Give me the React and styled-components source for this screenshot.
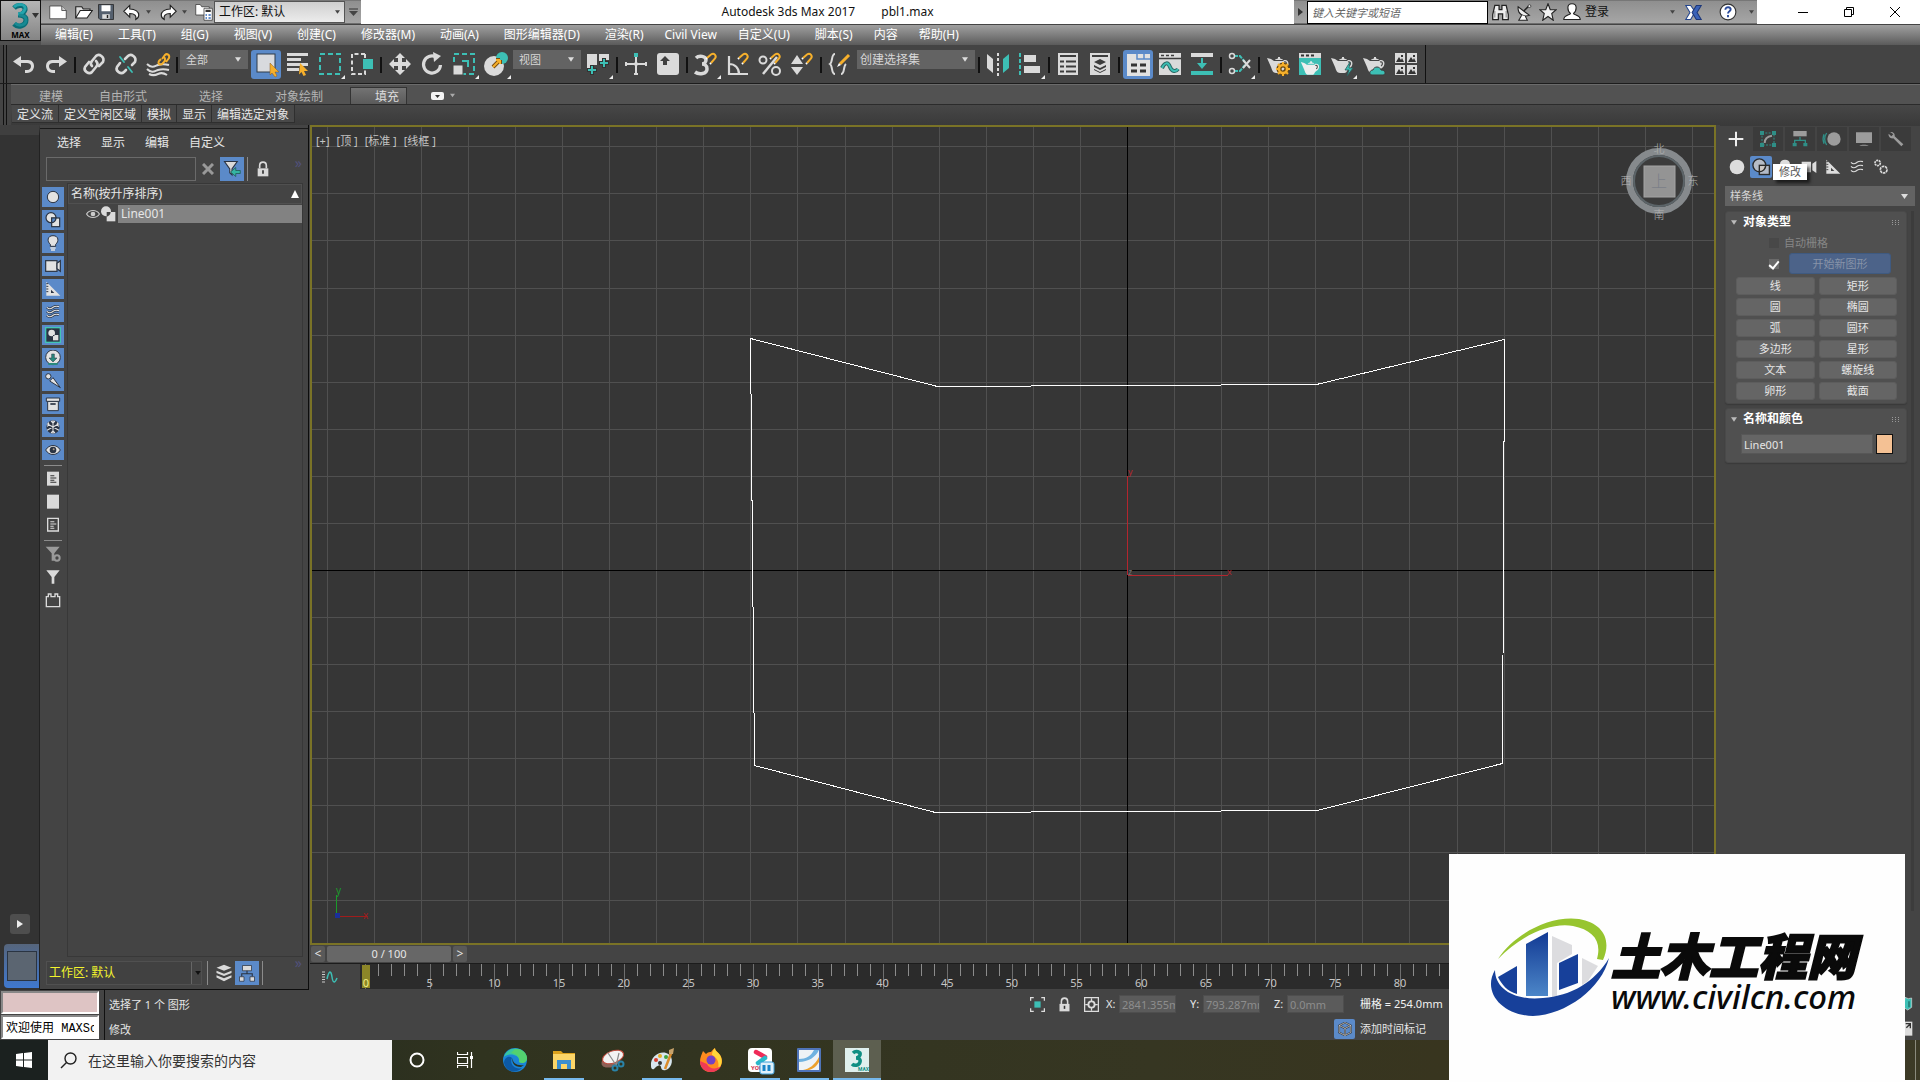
import React from "react";
import styled, { createGlobalStyle, css } from "styled-components";

const LIGHT = "#dadada";
const TEAL = "#3dbfb5";
const GOLD = "#f6b02c";
const BLUE = "#5b8ac9";
const SANS = '"Noto Sans", "Noto Sans CJK SC", sans-serif';

const GlobalStyle = createGlobalStyle`
  * { box-sizing: border-box; }
  html, body { margin: 0; padding: 0; background: #fff; }
  body { font: 12px/16px ${SANS}; color: #e6e6e6; overflow: hidden; }
  button, input, select { font: inherit; color: inherit; margin: 0; border-radius: 0; }
  button { padding: 0; border: 0; background: none; }
  svg { display: block; flex: none; }
`;

const Screen = styled.div`
  position: relative;
  display: flex;
  flex-direction: column;
  height: 100vh;
  min-width: 1500px;
  padding-bottom: 2px;
  background: #fff;
`;

/* ---------- icons ---------- */

const Icon = ({ size = 24, children, ...rest }) => (
  <svg width={size} height={size} viewBox="0 0 24 24" fill="none" aria-hidden="true" {...rest}>
    {children}
  </svg>
);

const Corner = () => <path d="M27 23v4h-4z" fill="#eee" />;

const Magnet = ({ x = 12, y = 1 }) => (
  <g transform={`translate(${x} ${y})`} stroke={GOLD} strokeWidth="2">
    <path d="M1 5l4-3.500c3-2 6 1 4 4l-4 4.500" />
    <path d="M1 5l-1 1M5 10l-1 1" stroke="#fff" />
  </g>
);

const Teapot = ({ fill = LIGHT }) => (
  <g>
    <path d="M1 6l4 1c1 .4 2 1.500 3 2h9l1-1c5-1 6 5 2 8-1 1-2 1-3 3-1 2-2 2-4 2h-3c-3 0-4-3-5-6L1 6z" fill={fill} />
    <path d="M9 8c1-2 7-2 8 0z" fill={fill} />
    <path d="M12 5h2v2h-2z" fill={fill} />
    <path d="M18 10c3-1 3 3 1 4" stroke="#444" strokeWidth="1.200" />
  </g>
);

const Arrow = () => (
  <path d="M14 11l8 8h-4l2 4-2.500 1-2-4-2.500 2.500z" fill={GOLD} />
);

const ShapesGlyph = () => (
  <g stroke="#2b2b2b" strokeWidth="1.500">
    <circle cx="10" cy="10" r="7" fill="#b7bcc6" />
    <rect x="10" y="10" width="11" height="10" fill="#d9cfc6" fillOpacity=".7" />
    <path d="M17 10a7 7 0 0 1-7 7" />
  </g>
);

const WavesGlyph = ({ color = LIGHT, edge }) => (
  <g fill="none">
    {[5, 11, 17].map((y) => (
      <g key={y}>
        {edge && <path d={`M3 ${y}c4 4 6 2 9 0s6-2 9-1`} stroke={edge} strokeWidth="4" />}
        <path d={`M3 ${y}c4 4 6 2 9 0s6-2 9-1`} stroke={color} strokeWidth="1.800" />
      </g>
    ))}
  </g>
);

const TriangleGlyph = ({ color = LIGHT, inner = "#444" }) => (
  <g>
    <path d="M2 1l21 21H2z" fill={color} />
    <path d="M9 13l5 5H9z" fill={inner} />
    <path d="M2 4h3M2 8h3M2 12h3M2 16h3" stroke={inner} strokeWidth="1.500" />
  </g>
);

const tool = {
  undo: <path d="M9 4v4h7c4 0 6 3 6 6s-2 7-7 7h-2v-3h2c3 0 4-2 4-4s-2-3-4-3H9v4L1 9.500z" fill={LIGHT} />,
  redo: <path d="M15 4v4H8c-4 0-6 3-6 6s2 7 7 7h2v-3H9c-3 0-4-2-4-4s2-3 4-3h6v4l8-5.500z" fill={LIGHT} />,
  link: (
    <g stroke={LIGHT} strokeWidth="2.600" strokeLinecap="round">
      <path d="M10 14c-2-2-1-4 0-5l4-5c3-3 9 1 7 6l-4 4" />
      <path d="M14 9c2 2 2 4 0 6l-4 5c-3 3-9-1-7-5l4-5" />
    </g>
  ),
  unlink: (
    <g strokeWidth="2.600" strokeLinecap="round">
      <path d="M11 7l3-3c3-3 9 1 7 6l-3 3" stroke={LIGHT} />
      <path d="M12 18l-2 2c-3 3-9-1-7-5l3-4" stroke={LIGHT} />
      <path d="M6 5l4 5M14 15l4 5" stroke={TEAL} strokeWidth="1.800" />
    </g>
  ),
  bind: (
    <g>
      <path d="M1 12c5 5 8 2 11 1s7-1 11 0M1 17c5 5 8 2 11 1s7-1 11 0M3 22c4 2 7 1 9 0s6-1 9 1" stroke={LIGHT} strokeWidth="2" />
      <g stroke={GOLD} strokeWidth="2">
        <path d="M16 7l3-4c2-2 5 0 4 3l-3 4M18 5c2 2 1 4-1 6-2 3-6 1-4-2l2-2" />
      </g>
    </g>
  ),
  select: (
    <g>
      <rect x="3" y="2" width="18" height="18" fill="#d8dade" stroke="#2f3a49" />
      <path d="M16 11l9 9h-4l2 4-2 1-3-4-2 2z" fill={GOLD} stroke="#8a5a20" strokeWidth=".5" />
    </g>
  ),
  byName: (
    <g>
      <path d="M1 2.500h21M1 7.500h14M1 12.500h21M1 17.500h12" stroke={LIGHT} strokeWidth="3" />
      <Arrow />
    </g>
  ),
  region: (
    <g>
      <rect x="2" y="2" width="20" height="20" stroke={TEAL} strokeWidth="2" strokeDasharray="5 3" />
      <Corner />
    </g>
  ),
  crossing: (
    <g>
      <path d="M15 2H2v20h13v-4M15 2v4" stroke={LIGHT} strokeWidth="2" strokeDasharray="4 2.500" />
      <rect x="13" y="7" width="10" height="10" fill={TEAL} />
    </g>
  ),
  move: (
    <path d="M12 1l5 5h-3v4h4V7l5 5-5 5v-3h-4v4h3l-5 5-5-5h3v-4H6v3l-5-5 5-5v3h4V6H7z" fill={LIGHT} />
  ),
  rotate: (
    <g>
      <path d="M16 5a8.500 8.500 0 1 0 4.500 8" stroke={LIGHT} strokeWidth="3.200" />
      <path d="M13 0l8 4-7 6z" fill={LIGHT} />
    </g>
  ),
  scale: (
    <g>
      <rect x="2" y="2" width="20" height="20" stroke={TEAL} strokeWidth="2" strokeDasharray="5 3" />
      <rect x="1" y="13" width="10" height="10" fill={LIGHT} stroke="#444" />
      <path d="M10 9h6v6" stroke={TEAL} strokeWidth="2" />
      <Corner />
    </g>
  ),
  place: (
    <g>
      <circle cx="10" cy="14" r="10" fill={LIGHT} />
      <circle cx="18" cy="6" r="6" fill={TEAL} />
      <path d="M9 15l7-7M16 8h-4M16 8v4" stroke="#7a4d10" strokeWidth="4" />
      <path d="M9 15l7-7M16 8h-4M16 8v4" stroke={GOLD} strokeWidth="2" />
      <Corner />
    </g>
  ),
  pivot: (
    <g>
      <path d="M1 2h10v11H7v5H1zM13 2h10v6h-5v5h-5z" fill={LIGHT} />
      <path d="M6 13v10M1 18h10M18 6v10M13 11h10" stroke="#333" strokeWidth="4" />
      <path d="M6 14v8M2 18h8M18 7v8M14 11h8" stroke={TEAL} strokeWidth="2" />
      <Corner />
    </g>
  ),
  manipulate: (
    <g>
      <path d="M12 5v17M2 12h20M2 10v4M22 10v4M10 22h4" stroke={LIGHT} strokeWidth="2" />
      <rect x="10" y="1" width="4" height="4" fill={TEAL} />
      <circle cx="12" cy="12" r="2" fill={LIGHT} />
    </g>
  ),
  keyboard: (
    <g>
      <rect x="1" y="1" width="22" height="22" rx="3" fill={LIGHT} />
      <path d="M9 4l5 5h-3v4H7V9H4z" fill="#3f3f3f" />
    </g>
  ),
  snap: (
    <g>
      <path d="M2 6c3-3 10-2 10 2 0 2-2 4-4 4 2 0 5 1 5 5 0 5-8 6-12 3" stroke={LIGHT} strokeWidth="3.500" />
      <Magnet />
      <Corner />
    </g>
  ),
  angle: (
    <g>
      <path d="M3 4v18h19M3 12c6 0 10 4 10 10" stroke={LIGHT} strokeWidth="2.200" />
      <Magnet />
    </g>
  ),
  percent: (
    <g>
      <path d="M19 5L5 22" stroke={LIGHT} strokeWidth="2.500" />
      <circle cx="5" cy="8" r="3.500" stroke={LIGHT} strokeWidth="2" />
      <circle cx="18" cy="19" r="4" stroke={LIGHT} strokeWidth="2" />
      <Magnet />
    </g>
  ),
  spinner: (
    <g>
      <path d="M1 12l6-9 6 9zM1 15h12l-6 8z" fill={LIGHT} />
      <Magnet />
    </g>
  ),
  sets: (
    <g>
      <path d="M7 2c-4 0-2 8-5 10 3 2 1 10 5 10M13 22c4 0 2-8 5-10" stroke={LIGHT} strokeWidth="2" />
      <path d="M12 12L21 3" stroke={GOLD} strokeWidth="3" />
      <path d="M9 15l2-4 2 2z" fill="#fff" />
    </g>
  ),
  mirror: (
    <g>
      <path d="M1 2l6 5v14l-6-5z" fill={LIGHT} />
      <path d="M23 2l-6 5v14l6-5z" fill={TEAL} />
      <path d="M12 1v23" stroke={LIGHT} strokeWidth="2" strokeDasharray="3 2" />
    </g>
  ),
  align: (
    <g>
      <path d="M2 1v22" stroke={TEAL} strokeWidth="2" strokeDasharray="4 2" />
      <path d="M6 3h12v7H6zM6 14h16v7H6z" fill={LIGHT} />
      <Corner />
    </g>
  ),
  sceneList: (
    <g>
      <rect x="2" y="1" width="20" height="22" fill={LIGHT} />
      <path d="M4 4h16M4 9.500h4M10 9.500h10M4 14.500h4M10 14.500h10M4 19.500h4M10 19.500h10" stroke="#3c3c3c" strokeWidth="2" />
    </g>
  ),
  layers: (
    <g>
      <rect x="2" y="1" width="20" height="22" fill={LIGHT} />
      <path d="M4 4h16" stroke="#3c3c3c" strokeWidth="2" />
      <path d="M12 7l6 3-6 3-6-3zM6 13l6 3 6-3v2l-6 3-6-3zM6 17l6 3 6-3v1l-6 3-6-3z" fill="#3c3c3c" />
    </g>
  ),
  ribbon: (
    <g>
      <rect x="1" y="2" width="23" height="22" fill="#e1e1e1" />
      <path d="M11 2v5h13M18 2v5" stroke={BLUE} strokeWidth="1.500" />
      <path d="M5 13h6M14 13h6M5 19h6M14 19h6" stroke="#333" strokeWidth="3" />
    </g>
  ),
  curve: (
    <g>
      <rect x="1" y="1" width="22" height="22" fill={LIGHT} />
      <path d="M1 6.500h22M3 3.500h3M8 3.500h3M13 3.500h3" stroke="#3c3c3c" strokeWidth="1.500" />
      <path d="M4 16c3-6 6-6 8-1s6 5 8 2" stroke="#2c6b67" strokeWidth="4" />
      <path d="M4 16c3-6 6-6 8-1s6 5 8 2" stroke={TEAL} strokeWidth="2" />
    </g>
  ),
  dock: (
    <g>
      <path d="M1 1h22v4H1z" fill={LIGHT} />
      <path d="M1 19h22v4H1zM11 6h2v5h4l-5 6-5-6h4z" fill={TEAL} />
    </g>
  ),
  schematic: (
    <g>
      <path d="M6 4h6l5 6M6 19h6l5-6" stroke={TEAL} strokeWidth="2" strokeDasharray="4 1" />
      <circle cx="4" cy="4" r="2.500" stroke={LIGHT} strokeWidth="1.500" />
      <circle cx="4" cy="19" r="2.500" stroke={LIGHT} strokeWidth="1.500" />
      <path d="M15 8l7 8M22 8l-7 8" stroke={LIGHT} strokeWidth="2" />
      <Corner />
    </g>
  ),
  renderSetup: (
    <g>
      <Teapot />
      <circle cx="17" cy="17" r="4" stroke="#6b4a10" strokeWidth="5" />
      <circle cx="17" cy="17" r="4" stroke={GOLD} strokeWidth="2.500" />
      <path d="M17 10v3M17 21v3M10 17h3M21 17h3M12 12l2 2M20 20l2 2M22 12l-2 2M12 22l2-2" stroke={GOLD} strokeWidth="2" />
    </g>
  ),
  renderFrame: (
    <g>
      <rect x="1" y="1" width="22" height="22" fill={TEAL} />
      <path d="M1 1h22v5H1z" fill={LIGHT} />
      <path d="M3 3.500h3M8 3.500h3M13 3.500h3" stroke="#333" strokeWidth="2" />
      <g transform="translate(2 5) scale(.85)">
        <Teapot fill="#eee" />
      </g>
    </g>
  ),
  render: (
    <g>
      <Teapot />
      <path d="M20 10l-5 8h4l-2 6 6-8h-4z" fill={TEAL} stroke="#2b5d5a" strokeWidth=".8" />
      <Corner />
    </g>
  ),
  cloud: (
    <g>
      <Teapot />
      <path d="M10 23c-3 0-3-5 1-5 1-4 7-4 8 0 5 0 5 5 2 5z" fill={TEAL} stroke="#3c3c3c" />
    </g>
  ),
  gallery: (
    <g>
      {[[1, 1], [13, 1], [1, 13], [13, 13]].map(([x, y]) => (
        <g key={`${x}${y}`}>
          <rect x={x} y={y} width="10" height="10" fill={LIGHT} />
          <path d={`M${x + 1} ${y + 9}l3-5 2 3 1-2 2 4z`} fill="#333" />
          <rect x={x + 6} y={y + 2} width="2" height="2" fill="#333" />
        </g>
      ))}
    </g>
  ),
};

/* ---------- shared controls ---------- */

const Caret = ({ color = "#ddd", w = 7, h = 5 }) => (
  <svg width={w} height={h} viewBox="0 0 7 5" aria-hidden="true">
    <path d="M0 0h7L3.500 5z" fill={color} />
  </svg>
);

const SelectBox = styled.div`
  display: grid;
  align-items: center;
  width: ${(p) => p.$width};
  height: ${(p) => p.$height || "20px"};
  margin: ${(p) => p.$margin || 0};
  > * { grid-area: 1 / 1; }
  > svg { justify-self: end; margin-right: ${(p) => p.$caretGap || "7px"}; pointer-events: none; }
`;

const SelectField = styled.select`
  appearance: none;
  width: 100%;
  height: 100%;
  padding: 0 ${(p) => p.$pad || "6px"};
  border: ${(p) => p.$border || "0"};
  background: ${(p) => p.$bg || "#636363"};
  color: ${(p) => p.$color || "#d6d6d6"};
  font-size: ${(p) => p.$size || "11px"};
  line-height: 16px;
`;

const Dropdown = ({ label, value, caret, caretW, caretH, box = {}, field = {} }) => (
  <SelectBox {...box}>
    <SelectField aria-label={label} defaultValue={value} {...field}>
      <option>{value}</option>
    </SelectField>
    <Caret color={caret} w={caretW} h={caretH} />
  </SelectBox>
);

/* ---------- header ---------- */

const Header = styled.header`
  display: grid;
  grid-template-columns: 41px 1fr;
  height: 45px;
  flex: none;
  background: #4f4f4f;
`;

const AppButton = styled.button`
  display: flex;
  flex-direction: column;
  align-items: center;
  width: 41px;
  height: 41px;
  border: 1px solid #111;
  background: linear-gradient(#b5b5b5, #858585);
  color: #000;
  font-weight: 700;
  font-size: 8px;
  line-height: 10px;
`;

const AppMark = styled.span`
  display: flex;
  align-items: center;
  gap: 2px;
  height: 29px;
  padding-left: 10px;
`;

const TitleRow = styled.div`
  display: flex;
  height: 24px;
  background: #fff;
  color: #111;
`;

const GreyStrip = styled.div`
  display: flex;
  align-items: center;
  height: 24px;
  background: linear-gradient(#8f8f8f, #a6a6a6);
  border-top: 1px solid #777;
  border-bottom: 1px solid #6d6d6d;
`;

const SmallButton = styled.button`
  display: grid;
  place-items: center;
  width: ${(p) => p.$w || 24}px;
  height: 22px;
`;

const WindowTitle = styled.h1`
  flex: 1;
  display: flex;
  justify-content: center;
  gap: 26px;
  margin: 0;
  font-size: 12px;
  font-weight: 400;
  line-height: 23px;
`;

const HelpSearch = styled.input`
  width: 181px;
  height: 23px;
  padding: 0 4px;
  border: 1px solid #000;
  background: #fff;
  font-size: 11px;
  font-style: italic;
  &::placeholder { color: #666; opacity: 1; }
`;

const SignIn = styled.button`
  display: flex;
  align-items: center;
  justify-content: space-between;
  width: 92px;
  padding: 0 1px;
  color: #111;
`;

const WindowButton = styled.button`
  display: grid;
  place-items: center;
  width: 46px;
  height: 24px;
`;

const WindowButtons = styled.div`
  display: flex;
  padding: 0 2px 0 23px;
`;

const MenuBar = styled.nav`
  display: flex;
  align-items: center;
  gap: 1px;
  height: 21px;
  padding-left: 2px;
  border-top: 1px solid #444;
  background: linear-gradient(#a0a0a0, #5b5b5b);
`;

const MenuItem = styled.button`
  padding: 0 ${(p) => (p.$plain ? 8 : 12)}px;
  color: #fff;
  line-height: 18px;
  white-space: nowrap;
`;

const MENUS = ["编辑(E)", "工具(T)", "组(G)", "视图(V)", "创建(C)", "修改器(M)", "动画(A)", "图形编辑器(D)", "渲染(R)", "Civil View", "自定义(U)", "脚本(S)", "内容", "帮助(H)"];

function TopHeader() {
  return (
    <Header>
      <AppButton aria-label="MAX">
        <AppMark>
          <svg width="18" height="26" viewBox="0 0 18 26" fill="none">
            <path d="M2 5c4-4 12-3 11 2-1 3-4 5-7 5 4 0 8 1 8 5 0 6-8 8-12 4" stroke="#0b6d76" strokeWidth="5" />
            <path d="M2 4c4-4 12-3 11 2-1 3-4 5-7 5" stroke="#25a5ad" strokeWidth="3" />
            <path d="M7 12c4 0 7 1 7 5 0 5-7 7-11 3" stroke="#188a93" strokeWidth="3" />
          </svg>
          <Caret color="#333" />
        </AppMark>
        MAX
      </AppButton>
      <div>
        <TitleRow>
          <GreyStrip>
            <SmallButton $w={34} aria-label="新建">
              <Icon size={18}><path d="M1 4h16l6 6v11H1z" fill="#fff" stroke="#333" /><path d="M17 4v6h6" fill="#ccc" stroke="#333" /></Icon>
            </SmallButton>
            <SmallButton $w={14} aria-label="打开">
              <Icon size={18}><path d="M1 20V5h8l2 3h9v3" fill="#ddd" stroke="#222" strokeWidth="1.500" /><path d="M1 20l6-10h16l-7 10z" fill="#fff" stroke="#222" strokeWidth="1.500" /></Icon>
            </SmallButton>
            <SmallButton $w={34} aria-label="保存">
              <Icon size={18}><path d="M2 2h20v20H4l-2-2z" fill="#55606e" stroke="#222" /><path d="M6 3h12v8H6z" fill="#fff" /><path d="M7 15h10v6H7z" fill="#ddd" /><path d="M14 16v4" stroke="#222" strokeWidth="2" /></Icon>
            </SmallButton>
            <SmallButton $w={14} aria-label="撤消">
              <Icon size={18}><path d="M9 3v5c8 0 12 4 12 8 0 3-2 5-4 6 1-5-1-8-8-8v5L1 11z" fill="#fff" stroke="#222" strokeWidth="1.500" /></Icon>
            </SmallButton>
            <SmallButton $w={22} aria-label="撤消列表"><Caret color="#444" w={5} h={4} /></SmallButton>
            <SmallButton $w={14} aria-label="重做">
              <Icon size={18}><path d="M15 3v5C7 8 3 12 3 16c0 3 2 5 4 6-1-5 1-8 8-8v5l8-8z" fill="#fff" stroke="#222" strokeWidth="1.500" /></Icon>
            </SmallButton>
            <SmallButton $w={22} aria-label="重做列表"><Caret color="#444" w={5} h={4} /></SmallButton>
            <SmallButton $w={16} aria-label="工作区">
              <Icon size={18}><path d="M1 2h6l2 3h10v11H1z" fill="#fff" stroke="#333" /><path d="M12 7h11v16H12z" fill="#fff" stroke="#333" /><path d="M14 9h7v3h-7z" fill="#333" /><path d="M14 15h2v2h-2zM18 15h3v2h-3zM14 19h2v2h-2zM18 19h3v2h-3z" fill="#3268b8" /></Icon>
            </SmallButton>
            <Dropdown
              label="工作区"
              value="工作区: 默认"
              caret="#444"
              caretW={5}
              caretH={4}
              box={{ $width: "131px", $height: "22px", $margin: "0 0 0 3px", $caretGap: "5px" }}
              field={{ $bg: "linear-gradient(#cfcfcf, #ececec)", $color: "#111", $size: "12px", $border: "1px solid #555", $pad: "4px" }}
            />
            <SmallButton $w={16} aria-label="自定义快速访问">
              <svg width="9" height="8" viewBox="0 0 9 8"><path d="M0 1h9" stroke="#333" /><path d="M0 3h9L4.500 8z" fill="#444" /></svg>
            </SmallButton>
          </GreyStrip>
          <WindowTitle>
            <span>Autodesk 3ds Max 2017</span>
            <span>pbl1.max</span>
          </WindowTitle>
          <GreyStrip>
            <SmallButton $w={13} aria-label="展开"><svg width="5" height="8"><path d="M0 0l5 4-5 4z" fill="#333" /></svg></SmallButton>
            <HelpSearch aria-label="搜索帮助" placeholder="键入关键字或短语" />
            <SmallButton aria-label="搜索">
              <Icon size={17}><path d="M4 2h6v6h4V2h6l3 13v7h-8v-8H9v8H1v-7z" fill="#eee" stroke="#222" strokeWidth="1.800" /><path d="M4 10v9M20 10v9" stroke="#888" strokeWidth="1.500" /></Icon>
            </SmallButton>
            <SmallButton aria-label="通讯中心">
              <Icon size={17}><path d="M3 4c-1 10 7 15 16 12z" fill="#eee" stroke="#222" strokeWidth="1.500" /><path d="M11 10l7-7" stroke="#222" strokeWidth="2" /><circle cx="19" cy="3" r="2" fill="#eee" stroke="#222" /><path d="M8 16l-4 7h12l-3-6" fill="#fff" stroke="#222" strokeWidth="1.500" /></Icon>
            </SmallButton>
            <SmallButton aria-label="收藏夹">
              <Icon size={18}><path d="M12 1l3 8h8l-6 5 2 9-7-5-7 5 2-9-6-5h8z" fill="#f2f2f2" stroke="#222" strokeWidth="1.500" /></Icon>
            </SmallButton>
            <SmallButton aria-label="用户">
              <Icon size={18}><path d="M12 1c8 0 6 10 2 13 0 2 9 2 9 8H1c0-6 9-6 9-8C6 11 4 1 12 1z" fill="#fff" stroke="#222" strokeWidth="1.500" /></Icon>
            </SmallButton>
            <SignIn>登录<Caret color="#444" w={5} h={4} /></SignIn>
            <SmallButton $w={34} aria-label="应用商店">
              <Icon size={17}><path d="M1 2h7l5 7-1 6-4 7H1l6-10z" fill="#fff" stroke="#24468f" strokeWidth="1.500" /><path d="M23 2h-7l-6 10 6 10h7l-6-10z" fill="#3a62b8" stroke="#1d3779" strokeWidth="1.500" /></Icon>
            </SmallButton>
            <SmallButton $w={36} aria-label="帮助">
              <Icon size={18}><circle cx="12" cy="12" r="10.500" fill="#fff" stroke="#333" strokeWidth="1.500" /><path d="M8.500 9c0-5 8-4 7 0-.5 2-3.500 2-3.500 5M12 16v3" stroke="#2a4a9a" strokeWidth="2.500" /></Icon>
            </SmallButton>
            <SmallButton $w={11} aria-label="帮助列表"><Caret color="#444" w={5} h={4} /></SmallButton>
          </GreyStrip>
          <WindowButtons>
            <WindowButton aria-label="最小化"><svg width="10" height="10"><path d="M0 5.500h10" stroke="#000" /></svg></WindowButton>
            <WindowButton aria-label="还原"><svg width="10" height="10" fill="none"><path d="M.5 2.500h7v7h-7zM2.500 2.500v-2h7v7h-2" stroke="#000" /></svg></WindowButton>
            <WindowButton aria-label="关闭"><svg width="10" height="10"><path d="M0 0l10 10M10 0L0 10" stroke="#000" /></svg></WindowButton>
          </WindowButtons>
        </TitleRow>
        <MenuBar>
          {MENUS.map((m) => (
            <MenuItem key={m} $plain={!m.includes("(")}>{m}</MenuItem>
          ))}
        </MenuBar>
      </div>
    </Header>
  );
}

/* ---------- main toolbar ---------- */

const ToolbarRow = styled.div`
  display: flex;
  flex: none;
  height: 39px;
  background: #444;
  border-bottom: 1px solid #1c1c1c;
`;

const grip = css`
  background-image: linear-gradient(90deg, transparent 3px, #111 3px, #111 4px, transparent 4px, transparent 6px, #111 6px, #111 7px, transparent 7px);
`;

const Tools = styled.div`
  display: flex;
  align-items: flex-start;
  padding: 5px 3px 0 8px;
  border-right: 1px solid #111;
  ${grip}
`;

const ToolButton = styled.button`
  display: grid;
  place-items: center;
  width: 30px;
  height: 29px;
  margin: 0 1px;
  padding-bottom: 2px;
  border-radius: 3px;
  ${(p) => p.$active && css`background: ${BLUE};`}
  svg { overflow: visible; }
`;

const ToolDivider = styled.span`
  width: 2px;
  height: 16px;
  margin: 7px 2px 0;
  background: #111;
`;

const TOOLS = [
  "undo", "redo", "|", "link", "unlink", "bind", "|", { value: "全部", width: "68px", m: "0 2px 0 0" },
  "select*", "byName", "region", "crossing", "|", "move", "rotate", "scale", "place",
  { value: "视图", width: "68px", m: "0 1px" }, "pivot", "|", "manipulate", "keyboard", "|",
  "snap", "angle", "percent", "spinner", "|", "sets", { value: "创建选择集", width: "118px", m: "0 1px", size: "12px", pad: "3px" }, "|",
  "mirror", "align", "|", "sceneList", "layers", "|", "ribbon*", "curve", "dock", "|", "schematic", "|",
  "renderSetup", "renderFrame", "render", "cloud", "gallery",
];

function MainToolbar() {
  return (
    <ToolbarRow>
      <Tools>
        {TOOLS.map((t, i) => {
          if (t === "|") return <ToolDivider key={i} />;
          if (typeof t === "object") {
            return (
              <Dropdown
                key={i}
                label={t.value}
                value={t.value}
                caretW={6}
                box={{ $width: t.width, $height: "19px", $margin: t.m }}
                field={{ $size: t.size, $pad: t.pad }}
              />
            );
          }
          const name = t.replace("*", "");
          return (
            <ToolButton key={i} $active={t.endsWith("*")} aria-label={name}>
              <Icon>{tool[name]}</Icon>
            </ToolButton>
          );
        })}
      </Tools>
    </ToolbarRow>
  );
}

/* ---------- ribbon ---------- */

const Ribbon = styled.div`
  flex: none;
  height: 41px;
  padding-left: 11px;
  background-color: #444;
  ${grip}
`;

const RibbonTabs = styled.div`
  display: flex;
  align-items: flex-end;
  height: 21px;
  padding-left: 3px;
  background: #525252;
  border-top: 1px solid #6b6b6b;
  border-bottom: 1px solid #2b2b2b;
`;

const RibbonTab = styled.button`
  width: ${(p) => p.$w}px;
  height: 17px;
  padding-left: 24px;
  text-align: left;
  line-height: 18px;
  white-space: nowrap;
  color: #b4b4b4;
  border: 1px solid transparent;
  border-bottom: 0;
  ${(p) => p.$active && css`
    background: linear-gradient(#737373, #5a5a5a);
    border-color: #333;
    color: #ddd;
  `}
`;

const RibbonToggle = styled.button`
  display: flex;
  align-items: center;
  gap: 6px;
  height: 17px;
  margin-left: 24px;
`;

const RibbonPanels = styled.div`
  display: flex;
  height: 20px;
  padding-left: 1px;
  background: linear-gradient(#474747, #3a3a3a);
`;

const RibbonPanel = styled.button`
  height: 18px;
  padding: 0 5px;
  border: solid #2f2f2f;
  border-width: 0 1px 1px 0;
  background: #494949;
  line-height: 20px;
  white-space: nowrap;
`;

function RibbonBar() {
  return (
    <Ribbon>
      <RibbonTabs>
        <RibbonTab $w={60}>建模</RibbonTab>
        <RibbonTab $w={100}>自由形式</RibbonTab>
        <RibbonTab $w={76}>选择</RibbonTab>
        <RibbonTab $w={100}>对象绘制</RibbonTab>
        <RibbonTab $w={57} $active>填充</RibbonTab>
        <RibbonToggle aria-label="最小化功能区">
          <svg width="13" height="8"><rect width="13" height="8" rx="2" fill="#f4f4f4" /><path d="M4 3h5L6.500 6z" fill="#333" /></svg>
          <Caret color="#aaa" w={5} h={5} />
        </RibbonToggle>
      </RibbonTabs>
      <RibbonPanels>
        {["定义流", "定义空闲区域", "模拟", "显示", "编辑选定对象"].map((p) => (
          <RibbonPanel key={p}>{p}</RibbonPanel>
        ))}
      </RibbonPanels>
    </Ribbon>
  );
}

/* ---------- workspace ---------- */

const Workspace = styled.main`
  display: flex;
  flex: 1;
  min-height: 0;
  background: #444;
`;

const LeftDock = styled.aside`
  display: flex;
  flex-direction: column;
  justify-content: flex-end;
  align-items: flex-end;
  width: 40px;
  border-top: 10px solid #3f3f3f;
  background: #333;
  border-right: 1px solid #222;
`;

const PlayButton = styled.button`
  display: grid;
  place-items: center;
  align-self: center;
  width: 20px;
  height: 20px;
  margin-bottom: 10px;
  border-radius: 3px;
  background: #4e4e4e;
`;

const LayoutTab = styled.button`
  width: 35px;
  height: 44px;
  margin-bottom: 2px;
  padding: 7px 2px 8px 3px;
  border-radius: 4px 0 0 4px;
  background: linear-gradient(#56657c, #3f78cf);
  &::before {
    content: "";
    display: block;
    height: 28px;
    border: 1px solid #2a3442;
    background: #5b6571;
  }
`;

const Explorer = styled.section`
  display: flex;
  flex-direction: column;
  width: 269px;
  padding-top: 3px;
  border-right: 1px solid #0d0d0d;
  border-bottom: 1px solid #0d0d0d;
`;

const ExplorerMenu = styled.nav`
  display: flex;
  gap: 20px;
  height: 29px;
  padding-left: 17px;
  border-top: 1px solid #1a1a1a;
  button { line-height: 28px; }
`;

const ExplorerSearch = styled.div`
  display: flex;
  align-items: center;
  height: 24px;
  padding-left: 6px;
`;

const FindInput = styled.input`
  width: 150px;
  height: 24px;
  border: 1px solid #6a6a6a;
  background: #424242;
`;

const SquareButton = styled.button`
  display: grid;
  place-items: center;
  width: ${(p) => p.$w || 24}px;
  height: 24px;
  ${(p) => p.$active && css`background: ${BLUE};`}
`;

const Divider = styled.span`
  width: 1px;
  height: 24px;
  margin: 0 ${(p) => p.$gap || 2}px;
  background: #8b8b8b;
`;

const More = styled.button`
  align-self: flex-start;
  margin-left: auto;
  padding: 1px 6px 0 0;
  color: #51517c;
  font-size: 14px;
  line-height: 10px;
`;

const ExplorerBody = styled.div`
  display: flex;
  flex: 1;
  min-height: 0;
  padding-top: 2px;
`;

const FilterColumn = styled.div`
  display: flex;
  flex-direction: column;
  align-items: flex-start;
  gap: 3px;
  width: 27px;
  padding: 4px 0 0 2px;
`;

const FilterButton = styled.button`
  display: grid;
  place-items: center;
  width: 22px;
  height: 20px;
  ${(p) => p.$on && css`background: ${BLUE};`}
`;

const FilterRule = styled.hr`
  width: 18px;
  height: 1px;
  margin: 2px 0 0 2px;
  border: 0;
  background: #8b8b8b;
`;

const ListPanel = styled.div`
  flex: 1;
  margin-right: 5px;
  border: 1px solid #383838;
`;

const ListHead = styled.button`
  display: flex;
  align-items: center;
  justify-content: space-between;
  width: 100%;
  height: 20px;
  padding: 0 2px;
  border: 1px solid #505050;
  white-space: nowrap;
`;

const ListRow = styled.div`
  display: flex;
  align-items: center;
  height: 20px;
  padding-left: 18px;
`;

const RowName = styled.span`
  flex: 1;
  height: 18px;
  margin-left: 2px;
  padding-left: 3px;
  background: #828282;
  line-height: 18px;
`;

const ExplorerFoot = styled.div`
  display: flex;
  align-items: center;
  height: 32px;
  padding-left: 6px;
`;

const fill = "#e2e2e2";
const ink = "#2b3443";
const FILTERS = [
  <circle cx="12" cy="12" r="8.500" fill={fill} stroke={ink} strokeWidth="1.500" />,
  <g stroke={ink} strokeWidth="1.800"><circle cx="9" cy="8.500" r="7.500" fill={fill} /><rect x="10" y="9" width="12" height="13" fill={fill} /><path d="M10 16a7.500 7.500 0 0 0 6.500-7H10z" fill={BLUE} /></g>,
  <g><path d="M12 1c-9 0-9 9-4 13v3h8v-3c5-4 5-13-4-13z" fill={fill} stroke={ink} strokeWidth="1.500" /><path d="M8 19.500h8M9 22.500h6" stroke={fill} strokeWidth="2" /></g>,
  <g stroke={ink} strokeWidth="1.800" fill={fill}><rect x="1" y="4" width="17" height="16" /><path d="M18 8l5-4v16l-5-4z" /></g>,
  <TriangleGlyph color={fill} inner={ink} />,
  <WavesGlyph color={fill} edge={ink} />,
  <g><rect x="1" y="1" width="22" height="22" fill={ink} stroke="#43c5b5" strokeWidth="2" /><circle cx="10" cy="9" r="5" fill={fill} /><path d="M12 12h8v8h-8z" fill={fill} /><path d="M12 14a5 5 0 0 0 3-2h-3z" fill={ink} /></g>,
  <g><circle cx="12" cy="11" r="11" fill={fill} stroke={ink} strokeWidth="1.500" /><path d="M10 6h4v6h4l-6 6-6-6h4z" fill="#2a8a7d" stroke={ink} strokeWidth=".8" /><path d="M5 21h14" stroke="#2a8a7d" strokeWidth="3" /></g>,
  <g stroke={ink} strokeWidth="1.500" fill={fill}><circle cx="5" cy="5" r="4" /><path d="M7 12l5-5 11 15z" /></g>,
  <g stroke={ink} strokeWidth="1.500" fill={fill}><path d="M4 8h16v14H4z" /><path d="M2 3h20v5H2z" /><path d="M8 12h8" strokeWidth="2.500" /></g>,
  <g><circle cx="12" cy="12" r="10" fill={ink} /><path d="M12 2v20M3 7l18 10M21 7L3 17M9 3l3 3 3-3M9 21l3-3 3 3M3 11l3-2-1-4M21 11l-3-2 1-4" stroke={fill} strokeWidth="1.600" /></g>,
  <g><path d="M1 12c5-9 17-9 22 0-5 9-17 9-22 0z" fill={fill} stroke={ink} strokeWidth="1.500" /><circle cx="12" cy="12" r="5" fill={ink} /><circle cx="13" cy="11" r="1.500" fill="#a98" /></g>,
];

const VIEW_FILTERS = [
  <g><path d="M3 1h18v21H3z" fill={LIGHT} /><path d="M8 7h6M8 10.500h9M8 14h6M8 17h9" stroke="#333" strokeWidth="1.600" /></g>,
  <path d="M3 1h18v21H3z" fill={LIGHT} />,
  <g><path d="M4 2h16v19H4z" stroke={LIGHT} strokeWidth="2" /><path d="M8 7h6M8 10.500h9M8 14h5M8 17h6" stroke={LIGHT} strokeWidth="1.600" /></g>,
];

const FUNNELS = [
  <g><path d="M1 1h21l-8 10v11h-4V11z" fill="#9a9a9a" /><circle cx="18" cy="18" r="4" stroke="#9a9a9a" strokeWidth="3" fill="#444" /></g>,
  <path d="M2 2h20l-8 10v10h-4V12z" fill={LIGHT} />,
  <path d="M2 7h3V3h4v4h6V3h4v4h3v15H2z" stroke={LIGHT} strokeWidth="2" />,
];

const Lock = ({ size = 18 }) => (
  <Icon size={size}><path d="M4 11h16v12H4z" fill={LIGHT} /><path d="M7 11V7c0-7 10-7 10 0v4" stroke={LIGHT} strokeWidth="2.500" /><path d="M12 14v5" stroke="#333" strokeWidth="2.500" /></Icon>
);

const Tiers = () => (
  <Icon size={18}><path d="M12 1l10 4-10 4L2 5zM2 9l10 4 10-4v3l-10 4-10-4zM2 15l10 4 10-4v3l-10 5-10-5z" fill={LIGHT} /></Icon>
);

function SceneExplorer() {
  return (
    <Explorer>
      <ExplorerMenu>
        {["选择", "显示", "编辑", "自定义"].map((m) => <button key={m}>{m}</button>)}
      </ExplorerMenu>
      <ExplorerSearch>
        <FindInput aria-label="查找" />
        <SquareButton aria-label="清除"><svg width="12" height="12"><path d="M1 1l10 10M11 1L1 11" stroke="#999" strokeWidth="3" /></svg></SquareButton>
        <SquareButton $active aria-label="过滤器">
          <Icon size={18}><path d="M2 2h17l-7 10v8l-3-3v-5z" fill={LIGHT} stroke={ink} strokeWidth="1.500" /><path d="M23 14h-6v-4l-7 6 7 6v-4h6z" fill="#35b5a2" stroke="#1d5a52" /></Icon>
        </SquareButton>
        <Divider $gap={3} />
        <SquareButton aria-label="锁定"><Lock size={16} /></SquareButton>
        <More aria-label="更多">»</More>
      </ExplorerSearch>
      <ExplorerBody>
        <FilterColumn>
          {FILTERS.map((f, i) => <FilterButton key={i} $on aria-label={`显示类别 ${i + 1}`}><Icon size={16}>{f}</Icon></FilterButton>)}
          <FilterRule />
          {VIEW_FILTERS.map((f, i) => <FilterButton key={i} aria-label={`视图 ${i + 1}`}><Icon size={16}>{f}</Icon></FilterButton>)}
          <FilterRule />
          {FUNNELS.map((f, i) => <FilterButton key={i} aria-label={`筛选 ${i + 1}`}><Icon size={16}>{f}</Icon></FilterButton>)}
        </FilterColumn>
        <ListPanel>
          <ListHead>
            名称(按升序排序)
            <svg width="8" height="8"><path d="M0 8h8L4 0z" fill="#fff" /></svg>
          </ListHead>
          <ListRow>
            <Icon size={14}><path d="M1 12c5-8 17-8 22 0-5 8-17 8-22 0z" stroke="#ccc" strokeWidth="2" /><circle cx="12" cy="12" r="4" fill="#ccc" /></Icon>
            <Icon size={16}><circle cx="9" cy="8" r="7.500" fill={LIGHT} /><path d="M10 9h13v14H10z" fill={LIGHT} /><path d="M10 16a8 8 0 0 0 6-7h-6z" fill="#444" /></Icon>
            <RowName>Line001</RowName>
          </ListRow>
        </ListPanel>
      </ExplorerBody>
      <ExplorerFoot>
        <Dropdown
          label="工作区"
          value="工作区: 默认"
          caret="#111"
          caretW={6}
          caretH={4}
          box={{ $width: "156px", $height: "24px", $caretGap: "1px" }}
          field={{ $bg: "linear-gradient(90deg, #414141 144px, #666 144px, #666 145px, #444 145px)", $color: "#f3f32d", $size: "12px", $border: "1px solid #505050", $pad: "2px" }}
        />
        <Divider $gap={5} />
        <SquareButton $w={22} aria-label="按层排序"><Tiers /></SquareButton>
        <SquareButton $active aria-label="按层次排序">
          <Icon size={18}><path d="M6 2h12v7H6z" fill={LIGHT} stroke={ink} /><path d="M12 9v4M5 17v-4h14v4" stroke={ink} strokeWidth="1.500" /><path d="M2 17h6v6H2zM16 17h6v6h-6z" fill={LIGHT} stroke={ink} /></Icon>
        </SquareButton>
        <Divider $gap={3} />
        <More aria-label="更多">»</More>
      </ExplorerFoot>
    </Explorer>
  );
}

/* ---------- viewport ---------- */

const ViewColumn = styled.section`
  display: flex;
  flex-direction: column;
  flex: 1;
  min-width: 0;
  margin: 0 4px 0 1px;
`;

const Viewport = styled.div`
  position: relative;
  flex: 1;
  min-height: 0;
  border: 2px solid #7a7326;
  background: #363636;
`;

const Canvas = styled.svg`
  width: 100%;
  height: 100%;
`;

const ViewLabel = styled.div`
  position: absolute;
  top: 6px;
  left: 4px;
  display: flex;
  gap: 7px;
  color: #c4c4c4;
  font-size: 11px;
  white-space: pre;
`;

const ViewCube = styled.svg`
  position: absolute;
  top: 11px;
  right: 12px;
`;

const GRID = 47.08;
const range = (from, to) => Array.from({ length: to - from + 1 }, (_, i) => from + i);
const OUTLINE = [[-377, -232], [-190, -184], [189, -186], [377, -231], [375, 193], [190, 240], [-192, 242], [-373, 195]];

function SceneCanvas() {
  return (
    <Canvas viewBox="-815 -443 1402 816" preserveAspectRatio="xMidYMid slice" role="img" aria-label="顶视图">
      <g stroke="#505050" shapeRendering="crispEdges">
        {range(-18, 18).map((i) => <path key={`v${i}`} d={`M${Math.round(i * GRID) + 0.5} -460v860`} />)}
        {range(-9, 8).map((i) => <path key={`h${i}`} d={`M-860 ${Math.round(i * GRID) + 0.5}h1600`} />)}
      </g>
      <path d="M.5 -460v860M-860 .5h1600" stroke="#000" shapeRendering="crispEdges" />
      <polygon transform="translate(.5 .5)" points={OUTLINE.map((p) => p.join(",")).join(" ")} fill="none" stroke="#fff" shapeRendering="crispEdges" />
      <path d="M.5 -94v99M.5 5h100" stroke="#b3262e" fill="none" shapeRendering="crispEdges" />
      <g fontSize="9" fontFamily={SANS}>
        <text x="1" y="-95" fill="#b3262e">y</text>
        <text x="100" y="5" fill="#b3262e">x</text>
        <text x="1" y="5" fill="#777">z</text>
      </g>
      <g shapeRendering="crispEdges" fill="none">
        <path d="M-790.500 345v-20" stroke="#1b9a2b" />
        <path d="M-790 346h31" stroke="#a01c1c" />
        <path d="M-792 343h5v5h-5z" fill="#1a2f9a" />
      </g>
      <g fontSize="10" fontFamily={SANS}>
        <text x="-791" y="324" fill="#1b9a2b">y</text>
        <text x="-764" y="349" fill="#a01c1c">x</text>
      </g>
    </Canvas>
  );
}

const Cube = () => (
  <ViewCube width="86" height="86" viewBox="0 0 86 86" aria-hidden="true">
    <circle cx="43" cy="43" r="29.500" fill="#3c3c3c" stroke="#868a8d" strokeWidth="7" />
    <circle cx="43" cy="43" r="25" fill="none" stroke="#5c6468" strokeWidth="2" />
    <rect x="28" y="28" width="31" height="31" fill="#949494" stroke="#a3a3a3" />
    <g fontFamily={SANS} fontSize="11" fontWeight="300" fill="#b4b4b4" textAnchor="middle">
      <text x="43" y="15">北</text>
      <text x="10" y="47">西</text>
      <text x="77" y="47">东</text>
      <text x="43" y="81">南</text>
      <text x="43" y="49" fontSize="16" fill="#7b7f88">上</text>
    </g>
  </ViewCube>
);

const TimeSlider = styled.div`
  display: flex;
  align-items: center;
  gap: 2px;
  height: 19px;
  padding-left: 1px;
  border-bottom: 1px solid #1c1c1c;
`;

const SliderPart = styled.button`
  width: ${(p) => p.$w}px;
  height: 16px;
  border-radius: 2px;
  background: ${(p) => (p.$w > 20 ? "#676767" : "#595959")};
  font-size: ${(p) => (p.$w > 20 ? 11 : 12)}px;
  line-height: 16px;
`;

const TrackBar = styled.div`
  display: flex;
  height: 26px;
`;

const CurveToggle = styled.button`
  display: grid;
  place-items: center;
  width: 40px;
  margin-right: 10px;
`;

const Ruler = styled.div`
  display: flex;
  flex: 1;
  padding: 0 44px 0 5px;
  background: #2b2b2b;
  border-bottom: 1px solid #444;
`;

const Frame = styled.span`
  flex: 1 1 0;
  width: 0;
  height: ${(p) => (p.$major ? 25 : 12)}px;
  border-left: 1px solid ${(p) => (p.$major ? "#6f6f6f" : "#8c8c8c")};
  display: flex;
`;

const FrameLabel = styled.span`
  flex: none;
  width: 30px;
  margin-left: -16px;
  padding-top: 11px;
  text-align: center;
  font-size: 11px;
  line-height: 16px;
  color: #c6c6c6;
`;

const PlayHead = styled.span`
  flex: none;
  width: 8px;
  height: 23px;
  margin: 1px 0 0 -4px;
  padding-top: 10px;
  background: #8c8628;
  font-size: 11px;
  line-height: 16px;
  text-align: center;
  color: #f1ee86;
`;

const LAST_LABEL = 80;

function ViewArea() {
  return (
    <ViewColumn>
      <Viewport>
        <SceneCanvas />
        <ViewLabel>
          <span>[+]</span><span>[顶 ]</span><span>[标准 ]</span><span>[线框 ]</span>
        </ViewLabel>
        <Cube />
      </Viewport>
      <TimeSlider>
        <SliderPart $w={14}>&lt;</SliderPart>
        <SliderPart $w={124}>0 / 100</SliderPart>
        <SliderPart $w={14}>&gt;</SliderPart>
      </TimeSlider>
      <TrackBar>
        <CurveToggle aria-label="曲线编辑器">
          <svg width="16" height="12" fill="none"><path d="M0 1h3M0 3.500h3M0 6h3M0 8.500h3M0 11h3" stroke="#ccc" /><path d="M5 8c2-9 4-9 5-2s3 6 5 1" stroke={TEAL} strokeWidth="1.500" /></svg>
        </CurveToggle>
        <Ruler>
          {range(0, 100).map((f) => (
            <Frame key={f} $major={f % 5 === 0}>
              {f === 0 && <PlayHead>0</PlayHead>}
              {f > 0 && f % 5 === 0 && f <= LAST_LABEL && <FrameLabel>{f}</FrameLabel>}
            </Frame>
          ))}
        </Ruler>
      </TrackBar>
    </ViewColumn>
  );
}

/* ---------- command panel ---------- */

const CommandPanel = styled.aside`
  width: 200px;
  padding-top: 1px;
  background: #444;
  border-top: 1px solid #3a3a3a;
`;

const PanelTabs = styled.div`
  display: flex;
  gap: 2px;
  padding: 0 0 5px 1px;
`;

const PanelTab = styled.button`
  display: grid;
  place-items: center;
  width: 30px;
  height: 24px;
  background: ${(p) => (p.$active ? "#444" : "#3b3b3b")};
`;

const CategoryRow = styled.div`
  position: relative;
  display: flex;
  gap: 2px;
  padding: 0 6px 8px;
`;

const Category = styled.button`
  display: grid;
  place-items: center;
  width: 22px;
  height: 22px;
  border-radius: 2px;
  ${(p) => p.$active && css`background: ${BLUE};`}
`;

const Tooltip = styled.div`
  position: absolute;
  top: 8px;
  left: 53px;
  padding: 0 6px;
  background: #fff;
  color: #555;
  font-size: 11px;
  line-height: 16px;
  box-shadow: 3px 3px 3px rgba(0, 0, 0, 0.6);
`;

const Rollouts = styled.div`
  display: flex;
  flex-direction: column;
  gap: 4px;
  margin: 5px 6px 0 5px;
  padding-right: 4px;
  border-right: 3px solid #3c3c3c;
  min-height: 700px;
`;

const Rollout = styled.section`
  border: 1px solid #494949;
  border-radius: 3px;
  background: #505050;
  box-shadow: 0 1px 1px #3a3a3a;
`;

const RolloutHead = styled.h2`
  display: flex;
  align-items: center;
  gap: 6px;
  height: 20px;
  margin: 0;
  padding: 0 7px 0 5px;
  color: #fff;
  font-size: 12px;
  font-weight: 700;
  > svg:last-child { margin-left: auto; }
`;

const OptionRow = styled.div`
  display: flex;
  align-items: center;
  height: 21px;
  padding-left: 43px;
  font-size: 11px;
  label { padding-left: 5px; color: #868686; }
`;

const Tick = styled.input`
  appearance: none;
  display: grid;
  place-items: center;
  width: 10px;
  height: 10px;
  background: ${(p) => (p.disabled ? "#484848" : "#6a6a6a")};
  &:checked::before {
    content: "";
    width: 8px;
    height: 4px;
    border: solid #fff;
    border-width: 0 0 2px 2px;
    transform: rotate(-50deg);
  }
`;

const StartShape = styled.button`
  width: 102px;
  height: 21px;
  margin-left: 10px;
  border: 1px solid #3f5a80;
  border-radius: 3px;
  background: #4c6389;
  color: #8793a8;
  line-height: 18px;
`;

const ButtonGrid = styled.div`
  display: grid;
  grid-template-columns: 1fr 1fr;
  gap: 3px 4px;
  padding: 3px 9px 3px 10px;
`;

const ObjectButton = styled.button`
  height: 18px;
  border: 1px solid #5d5d5d;
  border-radius: 3px;
  background: #656565;
  font-size: 11px;
  line-height: 16px;
`;

const NameRow = styled.div`
  display: flex;
  gap: 3px;
  padding: 5px 13px 8px 15px;
`;

const NameInput = styled.input`
  flex: 1;
  min-width: 0;
  height: 20px;
  padding: 0 2px;
  border: 1px solid #575757;
  background: #656565;
  font-size: 11px;
`;

const Swatch = styled.button`
  width: 17px;
  height: 20px;
  border: 1px solid #111;
  background: #f4c194;
`;

const Grip = () => (
  <svg width="7" height="5" fill="#999"><path d="M0 0h1v1H0zM3 0h1v1H3zM6 0h1v1H6zM0 2h1v1H0zM3 2h1v1H3zM6 2h1v1H6zM0 4h1v1H0zM3 4h1v1H3zM6 4h1v1H6z" /></svg>
);

const GREY = "#9c9c9c";
const DTEAL = "#2f8e86";
const PANEL_TABS = [
  <path d="M12 1v22M1 12h22" stroke="#eee" strokeWidth="3" />,
  <g><path d="M3 3h18v18H3z" stroke={DTEAL} strokeWidth="1.500" strokeDasharray="3 2" /><path d="M0 0h6v6H0zM18 0h6v6h-6zM0 18h6v6H0zM18 18h6v6h-6z" fill={DTEAL} /><path d="M7 18c0-7 4-10 11-11" stroke={GREY} strokeWidth="3" /></g>,
  <g><path d="M2 0h20v8H2z" fill={GREY} /><path d="M12 9v5M4 18v-4h16v4" stroke={DTEAL} strokeWidth="2" /><path d="M1 18h6v5H1zM17 18h6v5h-6z" fill={DTEAL} /></g>,
  <g><circle cx="15" cy="12" r="10" fill={GREY} /><path d="M4 3c-4 6-4 12 0 18M0 5c-2 5-2 9 0 14" stroke={DTEAL} strokeWidth="2" /></g>,
  <path d="M0 2h24v16H0zM5 22c3-2 11-2 14 0z" fill={GREY} />,
  <path d="M2 2c4-2 9 1 8 6l13 12-3 3L8 11C3 12 0 7 1 4l4 4 3-3-4-3z" fill={GREY} />,
];

const CATEGORIES = [
  <circle cx="12" cy="12" r="11" fill="#ddd" />,
  <g transform="translate(-1 -1) scale(1.100)"><ShapesGlyph /></g>,
  <path d="M12 1c-9 0-9 9-4 13v8h8v-8c5-4 5-13-4-13z" fill="#ddd" />,
  <path d="M1 4h14v16H1zM17 7l6-4v18l-6-4z" fill="#ddd" />,
  <TriangleGlyph color="#ddd" />,
  <WavesGlyph color="#ddd" />,
  <g stroke="#ddd" strokeWidth="2.500"><circle cx="7" cy="6" r="4" strokeDasharray="3 1" /><circle cx="16" cy="16" r="5" strokeDasharray="4 1" /></g>,
];

const SHAPES = ["线", "矩形", "圆", "椭圆", "弧", "圆环", "多边形", "星形", "文本", "螺旋线", "卵形", "截面"];

function CreatePanel() {
  return (
    <CommandPanel>
      <PanelTabs>
        {PANEL_TABS.map((g, i) => <PanelTab key={i} $active={i === 0} aria-label={`面板 ${i + 1}`}><Icon size={16} overflow="visible">{g}</Icon></PanelTab>)}
      </PanelTabs>
      <CategoryRow>
        {CATEGORIES.map((g, i) => <Category key={i} $active={i === 1} aria-label={`类别 ${i + 1}`}><Icon size={i === 1 ? 20 : 16}>{g}</Icon></Category>)}
        <Tooltip role="tooltip">修改</Tooltip>
      </CategoryRow>
      <Dropdown label="子类别" value="样条线" box={{ $width: "190px", $height: "20px", $margin: "0 0 0 5px" }} field={{ $pad: "5px" }} />
      <Rollouts>
        <Rollout>
          <RolloutHead><Caret color="#bbb" w={6} />对象类型<Grip /></RolloutHead>
          <OptionRow>
            <Tick type="checkbox" id="autogrid" disabled />
            <label htmlFor="autogrid">自动栅格</label>
          </OptionRow>
          <OptionRow>
            <Tick type="checkbox" id="start" aria-label="开始新图形" defaultChecked />
            <StartShape>开始新图形</StartShape>
          </OptionRow>
          <ButtonGrid>
            {SHAPES.map((s) => <ObjectButton key={s}>{s}</ObjectButton>)}
          </ButtonGrid>
        </Rollout>
        <Rollout>
          <RolloutHead><Caret color="#bbb" w={6} />名称和颜色<Grip /></RolloutHead>
          <NameRow>
            <NameInput aria-label="名称" defaultValue="Line001" />
            <Swatch aria-label="颜色" />
          </NameRow>
        </Rollout>
      </Rollouts>
    </CommandPanel>
  );
}

/* ---------- status bar ---------- */

const StatusBar = styled.footer`
  display: grid;
  grid-template-columns: 105px 1fr 896px;
  flex: none;
  height: 50px;
  background: #444;
  font-size: 11px;
`;

const Listener = styled.div`
  display: grid;
  grid-template-rows: 23px 24px;
  gap: 1px;
  padding: 1px 5px 0 1px;
  border-right: 1px solid #111;
`;

const ListenerLine = styled.input`
  width: 98px;
  min-width: 0;
  height: 100%;
  padding: 0 3px;
  border: 2px solid #fff;
  border-top-color: #888;
  border-left-color: #888;
  background: ${(p) => (p.$pink ? "#dec4c4" : "#fff")};
  color: #000;
  font: 12px/18px "Liberation Mono", "Noto Sans CJK SC", monospace;
`;

const Prompt = styled.div`
  display: grid;
  grid-template-rows: 25px 25px;
  padding-left: 4px;
  line-height: 30px;
`;

const Readout = styled.div`
  display: grid;
  grid-template-rows: 28px 22px;
`;

const CoordRow = styled.div`
  display: flex;
  align-items: center;
  padding-right: 7px;
`;

const StatusButton = styled.button`
  display: grid;
  place-items: center;
  width: ${(p) => p.$w || 27}px;
  height: 20px;
  ${(p) => p.$end && css`margin-left: auto;`}
`;

const Coord = styled.label`
  display: flex;
  align-items: center;
  width: 84px;
  padding-left: 1px;
  gap: 4px;
`;

const CoordInput = styled.input`
  width: 57px;
  height: 18px;
  padding: 0 0 0 2px;
  border: 1px solid #4e4e4e;
  background: #5b5b5b;
  color: #8d8d8d;
`;

const CoordName = styled.span`
  width: 9px;
`;

const GridSize = styled.span`
  padding-left: 3px;
  color: #f2f2f2;
  white-space: nowrap;
`;

const TagRow = styled.div`
  display: flex;
  align-items: center;
  gap: 5px;
  padding: 0 7px 0 310px;
`;

const TagButton = styled.button`
  display: grid;
  place-items: center;
  width: 21px;
  height: 20px;
  border-radius: 2px;
  background: ${BLUE};
`;

function Status() {
  return (
    <StatusBar>
      <Listener>
        <ListenerLine $pink aria-label="宏录制器" />
        <ListenerLine aria-label="侦听器" defaultValue="欢迎使用 MAXScript" />
      </Listener>
      <Prompt>
        <span>选择了 1 个 图形</span>
        <span>修改</span>
      </Prompt>
      <Readout>
        <CoordRow>
          <StatusButton aria-label="孤立"><Icon size={15}><path d="M1 6V1h5M18 1h5v5M23 18v5h-5M6 23H1v-5" stroke="#ddd" strokeWidth="2" /><path d="M7 7h10v10H7z" fill={TEAL} /></Icon></StatusButton>
          <StatusButton aria-label="锁定选择"><Lock size={15} /></StatusButton>
          <StatusButton aria-label="绝对模式"><Icon size={15}><path d="M1 1h22v22H1z" stroke="#ddd" strokeWidth="2" /><circle cx="12" cy="12" r="5" stroke="#ddd" strokeWidth="3" /><path d="M12 2v5M12 17v5M2 12h5M17 12h5" stroke="#ddd" strokeWidth="2" /></Icon></StatusButton>
          {[["X:", "2841.355mm"], ["Y:", "793.287mm"], ["Z:", "0.0mm"]].map(([k, v]) => (
            <Coord key={k}><CoordName>{k}</CoordName><CoordInput defaultValue={v} /></Coord>
          ))}
          <GridSize>栅格 = 254.0mm</GridSize>
          <StatusButton $end $w={16} aria-label="平移">
            <Icon size={16}><path d="M12 2l5 2 5-1v14l-6 4-6-4z" fill={TEAL} stroke="#ddd" /><path d="M18 8v9" stroke="#1d6b66" strokeWidth="2" /></Icon>
          </StatusButton>
        </CoordRow>
        <TagRow>
          <TagButton aria-label="时间标记"><Icon size={14}><path d="M12 1l10 5v12l-10 5L2 18V6zM2 6l10 5 10-5M12 11v12" stroke="#222" strokeWidth="3" /><path d="M12 1l10 5v12l-10 5L2 18V6zM2 6l10 5 10-5M12 11v12" stroke="#ddd" strokeWidth="1.300" /></Icon></TagButton>
          <span>添加时间标记</span>
          <StatusButton $end $w={16} aria-label="最大化视口">
            <Icon size={16}><path d="M2 1h21v21H2z" fill="#ddd" /><path d="M13 4h7v7M20 4l-6 6" stroke="#333" strokeWidth="2" /></Icon>
          </StatusButton>
        </TagRow>
      </Readout>
    </StatusBar>
  );
}

/* ---------- taskbar ---------- */

const Taskbar = styled.nav`
  display: flex;
  flex: none;
  height: 40px;
  background: linear-gradient(90deg, #1d2421, #30331f 25%, #363622 60%, #38351f 75%, #3c3a26);
`;

const ShowDesktop = styled.button`
  width: 5px;
  height: 40px;
  margin-left: auto;
  border-left: 1px solid #8a8a7c;
`;

const StartButton = styled.button`
  display: grid;
  place-items: center;
  width: 48px;
  height: 40px;
  background: #1b211f;
`;

const SearchBox = styled.label`
  display: flex;
  align-items: center;
  gap: 11px;
  width: 344px;
  padding-left: 12px;
  background: #f2f2f2;
  color: #333;
`;

const SearchInput = styled.input`
  flex: 1;
  min-width: 0;
  border: 0;
  padding: 1px 0 0;
  background: transparent;
  font-size: 14px;
  line-height: 20px;
  &::placeholder { color: #333; opacity: 1; }
`;

const TaskButton = styled.button`
  display: grid;
  place-items: center;
  width: ${(p) => (p.$active ? 48 : 49)}px;
  height: 40px;
  background: ${(p) => (p.$active ? "#5d5f50" : "transparent")};
`;

const RunningButton = styled(TaskButton)`
  background-image: linear-gradient(#76b9ed, #76b9ed);
  background-repeat: no-repeat;
  background-position: center bottom;
  background-size: ${(p) => (p.$active ? "48px" : "40px")} 2px;
`;

const APPS = [
  { name: "Edge", art: <g><circle cx="12" cy="12" r="12" fill="#1b84d6" /><path d="M1 9C4-3 23-2 24 10c0 5-5 6-8 4 2-7-10-10-15-5z" fill="#37c6a0" /><path d="M12 1c8 0 12 5 12 9 0 5-5 6-8 4 1-5-2-8-8-9z" fill="#5fd65a" opacity=".7" /><path d="M9 10c-3 6 3 12 10 10-6 6-16 4-18-5 0-5 5-8 8-5z" fill="#0c59a4" /><path d="M10 10c-1 5 4 8 11 7l-3 2c-7 0-10-5-8-9z" fill="#2b3320" /></g> },
  { name: "文件资源管理器", running: true, art: <g><path d="M1 3h8l2 2h12v4H1z" fill="#dca21e" /><path d="M1 6h22v15H1z" fill="#fbd568" /><path d="M5 21v-9h14v9h-4v-5H9v5z" fill="#3a8ed0" /></g> },
  { name: "截图工具", art: <g><ellipse cx="10" cy="13" rx="10" ry="6" transform="rotate(-20 10 13)" fill="#8c6258" /><ellipse cx="12" cy="9" rx="11" ry="6" transform="rotate(-20 12 9)" fill="#f3f3f3" stroke="#bf4a3c" /><path d="M7 5l8 12M18 5l-3 13" stroke="#8a8a8a" strokeWidth="1.200" /><circle cx="14" cy="20" r="2.500" stroke="#2a83a8" strokeWidth="2" /><circle cx="20" cy="16" r="2.500" stroke="#2a83a8" strokeWidth="2" /></g> },
  { name: "画图", running: true, art: <g><path d="M1 18C0 9 9 3 16 5c7 2 8 11 2 16-5 3-7 0-7-2-1-4-5 0-7 2-2 1-3-1-3-3z" fill="#d8e6ef" /><circle cx="6" cy="12" r="2" fill="#d83d2c" /><circle cx="10" cy="8" r="2" fill="#e7ae24" /><circle cx="16" cy="9" r="2" fill="#41a33d" /><circle cx="10" cy="15" r="2" fill="#333" /><path d="M22 3l-7 18" stroke="#d98b2b" strokeWidth="2.500" /><path d="M19 2l5-2-1 6h-4z" fill="#c8a36b" /></g> },
  { name: "Firefox", art: <g><path d="M2 8l2-5 3 3c2-2 4-2 5-2 1-1 2-3 4-4 0 3 3 4 5 7 5 7 0 17-9 17S-1 16 2 8z" fill="#ff8a1e" /><path d="M16 0c0 3 3 4 5 7 3 5 2 11-2 14 2-8-2-12-6-14 0-3 1-5 3-7z" fill="#ffd53a" /><path d="M1 13c0 7 5 11 11 11 4 0 8-2 10-6-5 4-12 3-14-2z" fill="#f03a56" /><circle cx="12" cy="12" r="4.500" fill="#7341c4" /></g> },
  { name: "YOU", running: true, art: <g><rect width="24" height="24" rx="4" fill="#fff" /><path d="M8 4l9 5" stroke="#ef2b58" strokeWidth="4.500" strokeLinecap="round" /><path d="M17 10l-7 5" stroke="#29b8c9" strokeWidth="4.500" strokeLinecap="round" /><text x="3" y="22" fontSize="6" fontWeight="700" fill="#d12b4b" fontFamily="Roboto, sans-serif">YOU</text><rect x="12" y="14" width="14" height="12" rx="2" fill="#dff0fa" stroke="#3b9ed8" /><path d="M16 17v6M21 17v6" stroke="#1a84c8" strokeWidth="3" /></g> },
  { name: "笔记", running: true, art: <g><rect width="24" height="24" rx="1" fill="#4f74b8" /><rect x="2" y="2" width="20" height="20" fill="#eef3f6" /><path d="M2 11C9 11 14 8 17 2h5c-3 7-11 12-20 12z" fill="#6fb2e0" /><path d="M6 22c6-1 12-5 16-13v5c-3 5-6 7-10 8z" fill="#eda12c" /></g> },
  { name: "3ds Max", running: true, active: true, art: <g><rect width="24" height="24" fill="#dff0ee" /><path d="M8 5c3-3 8-1 7 2-1 2-3 3-4 3 2 0 5 1 4 4-1 4-6 4-8 2" stroke="#0f8f83" strokeWidth="3.500" /><text x="13" y="23" fontSize="5" fontWeight="700" fill="#0f8f83" fontFamily="Roboto, sans-serif">MAX</text></g> },
];

function WindowsTaskbar() {
  return (
    <Taskbar>
      <StartButton aria-label="开始">
        <svg width="16" height="16" fill="#fff"><path d="M0 2l7-1v6.500H0zM8 1l8-1v7.500H8zM0 8.500h7V15l-7-1zM8 8.500h8V16l-8-1z" /></svg>
      </StartButton>
      <SearchBox>
        <svg width="17" height="17" fill="none"><circle cx="10.500" cy="6.500" r="5.500" stroke="#222" strokeWidth="1.400" /><path d="M6.500 10.500L1 16" stroke="#222" strokeWidth="1.400" /></svg>
        <SearchInput aria-label="搜索" placeholder="在这里输入你要搜索的内容" />
      </SearchBox>
      <TaskButton aria-label="Cortana"><svg width="16" height="16" fill="none"><circle cx="8" cy="8" r="6.500" stroke="#fff" strokeWidth="2" /></svg></TaskButton>
      <TaskButton aria-label="任务视图"><svg width="17" height="16" fill="none"><path d="M.5 0v2.500h10V0M.5 5.500h10v6H.5zM.5 16v-2.500h10V16M14.500 0v16" stroke="#fff" strokeWidth="1.200" /><path d="M13 4h3v3h-3z" fill="#fff" /></svg></TaskButton>
      {APPS.map((a) => {
        const Item = a.running ? RunningButton : TaskButton;
        return (
          <Item key={a.name} $active={a.active} aria-label={a.name}>
            <Icon overflow="visible">{a.art}</Icon>
          </Item>
        );
      })}
      <ShowDesktop aria-label="显示桌面" />
    </Taskbar>
  );
}

/* ---------- brand card ---------- */

const BrandCard = styled.div`
  position: absolute;
  right: 15px;
  bottom: 0;
  display: flex;
  align-items: center;
  width: 456px;
  height: 228px;
  padding: 0 0 2px 41px;
  background: #fefefe;
  color: #0a0a0a;
`;

const BrandText = styled.div`
  display: flex;
  flex-direction: column;
  padding-top: 9px;
  font-style: italic;
  white-space: nowrap;
`;

const BrandName = styled.strong`
  font: italic 900 49px/50px "Noto Sans CJK SC", sans-serif;
  -webkit-text-stroke: 2px #0a0a0a;
`;

const BrandSite = styled.a`
  color: inherit;
  text-decoration: none;
  font: italic 500 33px/36px "Noto Sans", sans-serif;
`;

function Brand() {
  return (
    <BrandCard>
      <svg width="121" height="98" viewBox="0 0 121 98" aria-hidden="true">
        <defs>
          <linearGradient id="tower" x1="0" y1="0" x2="0" y2="1">
            <stop offset="0" stopColor="#123a94" />
            <stop offset="1" stopColor="#4c86c8" />
          </linearGradient>
        </defs>
        <path d="M62 18l20 9v9l-15 9v34h-5z" fill="#dcdcdf" />
        <path d="M92 40l16 8-10 15-6 4z" fill="#dcdcdf" />
        <path d="M8 59l19-11v28C17 73 12 67 8 59z" fill="#17409a" />
        <path d="M36 26l22-12v64H36z" fill="url(#tower)" />
        <path d="M69 45l19-9v29l-19 7z" fill="#17409a" />
        <path d="M8 41C24 16 60-3 89 1c24 4 33 21 24 41l-6-1c5-18-4-29-24-33C59 4 29 19 8 41z" fill="#97c52f" />
        <path d="M5 52c0 19 20 31 48 28 28-2 52-16 66-40-7 30-43 57-76 58C12 97-8 74 5 52z" fill="#17409a" />
      </svg>
      <BrandText>
        <BrandName>土木工程网</BrandName>
        <BrandSite href="#">www.civilcn.com</BrandSite>
      </BrandText>
    </BrandCard>
  );
}

export default function App() {
  return (
    <Screen>
      <GlobalStyle />
      <TopHeader />
      <MainToolbar />
      <RibbonBar />
      <Workspace>
        <LeftDock>
          <PlayButton aria-label="播放"><svg width="6" height="8"><path d="M0 0l6 4-6 4z" fill="#eee" /></svg></PlayButton>
          <LayoutTab aria-label="视口布局" />
        </LeftDock>
        <SceneExplorer />
        <ViewArea />
        <CreatePanel />
      </Workspace>
      <Status />
      <WindowsTaskbar />
      <Brand />
    </Screen>
  );
}
